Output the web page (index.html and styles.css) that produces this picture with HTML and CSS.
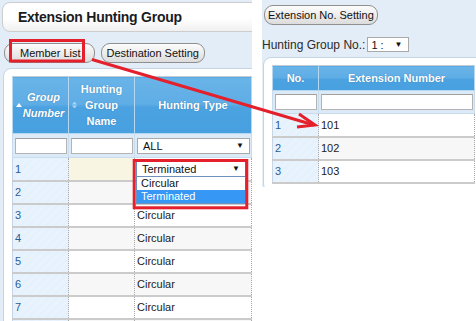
FILE: index.html
```html
<!DOCTYPE html>
<html lang="en">

<head>
    <meta charset="UTF-8" />
    <title>Extension Hunting Group</title>
    <link rel="stylesheet" href="styles.css">
</head>

<body>
    <div class="page">
        <!-- Left capture: hunting group list -->
        <div class="shot shot-left">
            <div class="title-bar">Extension Hunting Group</div>
            <div class="toolbar">
                <button type="button" class="pill-btn pill-wide">Member List</button>
                <button type="button" class="pill-btn">Destination Setting</button>
            </div>
            <div class="card">
                <table class="grid grid-groups">
                    <colgroup>
                        <col style="width:56px">
                        <col style="width:66px">
                        <col style="width:117px">
                    </colgroup>
                    <thead>
                        <tr>
                            <th class="sortable sorted">
                                <svg class="sort-icon" width="6" height="4" viewBox="0 0 6 4"><path d="M0 4 L3 0 L6 4 Z" fill="#fff"/></svg>
                                <em>Group<br>Number</em>
                            </th>
                            <th class="sortable">
                                <svg class="sort-icon" width="5" height="7" viewBox="0 0 5 7"><path d="M0 3 L2.5 0 L5 3 Z M0 4 L2.5 7 L5 4 Z" fill="#a9d6f6"/></svg>
                                Hunting<br>Group<br>Name
                            </th>
                            <th>Hunting Type</th>
                        </tr>
                    </thead>
                    <tbody>
                        <tr class="filter">
                            <td><input type="text"></td>
                            <td><input type="text"></td>
                            <td><div class="select"><span>ALL</span><span class="caret">&#9660;</span></div></td>
                        </tr>
                        <tr class="row">
                            <td class="num">1</td>
                            <td class="editing"></td>
                            <td>
                                <div class="pick">
                                    <div class="select select-open"><span>Terminated</span><span class="caret">&#9660;</span></div>
                                    <ul class="pick-list">
                                        <li>Circular</li>
                                        <li class="active">Terminated</li>
                                    </ul>
                                </div>
                            </td>
                        </tr>
                        <tr class="row alt"><td class="num">2</td><td></td><td></td></tr>
                        <tr class="row"><td class="num">3</td><td></td><td>Circular</td></tr>
                        <tr class="row alt"><td class="num">4</td><td></td><td>Circular</td></tr>
                        <tr class="row"><td class="num">5</td><td></td><td>Circular</td></tr>
                        <tr class="row alt"><td class="num">6</td><td></td><td>Circular</td></tr>
                        <tr class="row"><td class="num">7</td><td></td><td>Circular</td></tr>
                        <tr class="row alt"><td class="num"></td><td></td><td></td></tr>
                    </tbody>
                </table>
            </div>
        </div>

        <!-- Right capture: member list -->
        <div class="shot shot-right">
            <button type="button" class="pill-btn pill-ext">Extension No. Setting</button>
            <div class="group-pick">
                <label>Hunting Group No.:</label>
                <div class="select select-small"><span>1 :</span><span class="caret">&#9660;</span></div>
            </div>
            <div class="card card-right">
                <table class="grid grid-members">
                    <colgroup>
                        <col style="width:46px">
                        <col style="width:156px">
                    </colgroup>
                    <thead>
                        <tr><th>No.</th><th>Extension Number</th></tr>
                    </thead>
                    <tbody>
                        <tr class="filter">
                            <td><input type="text"></td>
                            <td><input type="text"></td>
                        </tr>
                        <tr class="row"><td class="num">1</td><td>101</td></tr>
                        <tr class="row alt"><td class="num">2</td><td>102</td></tr>
                        <tr class="row"><td class="num">3</td><td>103</td></tr>
                    </tbody>
                </table>
            </div>
        </div>

        <!-- Red call-outs drawn over both captures -->
        <svg class="annotations" width="476" height="321" viewBox="0 0 476 321">
            <g fill="none" stroke="#e3202b" stroke-width="3">
                <rect x="10.5" y="40.5" width="73" height="20.5"/>
                <rect x="134.2" y="160.5" width="112.6" height="47.3"/>
                <line x1="92" y1="59.5" x2="314" y2="125"/>
                <polyline points="299,114 315,125 297,127"/>
            </g>
        </svg>
    </div>
</body>

</html>
```

FILE: styles.css
```css
* {
    box-sizing: border-box;
}

body {
    margin: 0;
    background: #fff;
    font-family: "Liberation Sans", Arial, sans-serif;
    font-size: 11px;
    color: #1e1e1e;
}

.page {
    position: relative;
    width: 476px;
    height: 321px;
    display: flex;
    align-items: flex-start;
    gap: 10px;
    overflow: hidden;
}

.shot {
    flex: none;
    background: #e2edf8;
    overflow: hidden;
}

.shot-left {
    width: 252px;
    height: 321px;
    padding-top: 2px;
}

.shot-right {
    width: 214px;
    height: 187px;
    padding-top: 5px;
}

/* Page title */
.title-bar {
    margin-left: 2px;
    width: 280px;
    height: 30px;
    padding-left: 15px;
    border: 1px solid #cdcdcd;
    border-radius: 8px;
    background: linear-gradient(#fff 55%, #f0f0f0);
    font-size: 14px;
    font-weight: bold;
    line-height: 28px;
    letter-spacing: -0.25px;
    color: #1b1b22;
}

.toolbar {
    display: flex;
    gap: 6px;
    margin: 11px 0 0 4px;
}

.pill-btn {
    height: 20px;
    padding: 0 5px;
    border: 1px solid #8f8f8f;
    border-radius: 9px;
    background: linear-gradient(#fdfdfd, #dcdcdc);
    font-family: inherit;
    font-size: 11px;
    color: #111;
}

.pill-wide {
    padding: 0 13px 0 15px;
}

.pill-ext {
    margin-left: 2px;
    padding: 0 3px;
}

/* White rounded panel around each grid */
.card {
    width: 290px;
    margin: 5px 0 0 3px;
    padding: 7px 8px;
    border: 1px solid #c6d4e3;
    border-radius: 8px;
    background: #fff;
}

.card-right {
    width: 240px;
    margin: 5px 0 0 1px;
}

.group-pick {
    display: flex;
    align-items: center;
    gap: 2px;
    margin-top: 12px;
    font-size: 12px;
    color: #2f2a26;
}

/* Grid tables */
.grid {
    border-collapse: collapse;
    table-layout: fixed;
}

.grid th {
    padding: 4px 2px;
    border: 1px solid #b6d7f0;
    border-top-color: #c4cdd6;
    background: linear-gradient(#69b4e8, #5fade6 48%, #4ca2e0 52%, #47a0e0);
    color: #fff;
    font-size: 11px;
    font-weight: bold;
    line-height: 16px;
    text-align: center;
    text-shadow: 0 0 1px rgba(20, 70, 120, 0.5);
}

.grid th.sortable {
    position: relative;
}

.grid th.sorted {
    padding-left: 8px;
}

.grid th em {
    font-style: italic;
}

.sort-icon {
    position: absolute;
    left: 3px;
    top: 50%;
    transform: translateY(-50%);
}

.grid-members th {
    height: 25px;
    padding: 0 2px;
}

.grid .filter td {
    height: 24px;
    padding: 0 1px 0 2px;
    border: 1px solid #c9dcee;
    background: #dce9f6;
}

.grid-members .filter td {
    height: 23px;
}

.grid input {
    display: block;
    width: 100%;
    height: 16px;
    border: 1px solid #b3b3b3;
    border-top-color: #a0a0a0;
    background: #fff;
}

.grid .row td {
    height: 23px;
    padding: 0 2px;
    border-bottom: 2px solid #cbcbcb;
    border-left: 1px dotted #a9a9a9;
    border-right: 1px dotted #a9a9a9;
    color: #1b1b1b;
}

.grid .row.alt td {
    background: #f7f7f7;
}

.grid .row td.num {
    border-left: 1px solid #c6d6e6;
    background: repeating-linear-gradient(135deg, #e5f1fc 0 3px, #e9f3fd 3px 6px);
    color: #2c5d93;
}

.grid .row td.editing {
    background: #f8f6e3;
}

/* Select boxes */
.select {
    display: flex;
    align-items: center;
    justify-content: space-between;
    height: 16px;
    padding: 0 5px 0 5px;
    border: 1px solid #a9a9a9;
    background: #fff;
    font-size: 11px;
    color: #111;
}

.caret {
    font-size: 8px;
}

.select-small {
    width: 42px;
    height: 15px;
    padding: 0 6px 0 3px;
    font-size: 11px;
}

.pick {
    position: relative;
    width: 110px;
    margin-left: -1px;
}

.select-open {
    border-color: #6f90bd;
}

.pick-list {
    position: absolute;
    top: 100%;
    left: 0;
    width: 110px;
    margin: 0;
    padding: 0;
    list-style: none;
    border: 1px solid #6f90bd;
    border-top: none;
    background: #fff;
}

.pick-list li {
    height: 13px;
    padding-left: 4px;
    line-height: 13px;
    color: #111;
}

.pick-list li.active {
    background: #3797f4;
    color: #fff;
}

.annotations {
    position: absolute;
    top: 0;
    left: 0;
    pointer-events: none;
}
```
